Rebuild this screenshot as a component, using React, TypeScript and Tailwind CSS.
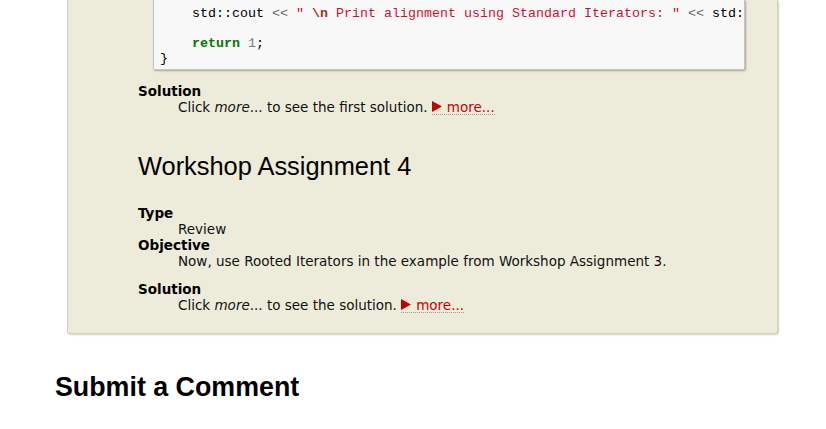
import React from "react";

function More() {
  return (
    <span className="inline-flex items-center border-b border-dotted border-[#9a9a9a] leading-[14px] text-[#cc0000]">
      <svg width="10" height="11" viewBox="0 0 10 11" className="mr-[5px]">
        <polygon points="0,0 10,5.5 0,11" fill="#c00000" />
      </svg>
      more...
    </span>
  );
}

export default function App() {
  const body = { fontFamily: '"DejaVu Sans", Verdana, sans-serif' };
  const mono = { fontFamily: '"Liberation Mono", "Courier New", monospace' };
  return (
    <div className="w-[826px] h-[429px] overflow-hidden bg-white text-black" style={body}>
      <div className="ml-[67px] w-[711px] bg-[#edecdb] border-x border-b border-[#d3d3a6] rounded-b-[3px] shadow-[1px_1px_2px_rgba(0,0,0,0.18)] pb-[20px]">
        <div className="ml-[85px] w-[592px] bg-[#f8f8f8] border-x border-b border-[#c4c4c4] rounded-b-[2px] shadow-[1px_1px_2px_rgba(0,0,0,0.3)] overflow-hidden">
          <pre className="text-[13.33px] leading-[15px] pt-[6px] pb-[3px] pl-[6px] whitespace-pre" style={mono}>
            <div>
              {"    "}
              <span className="text-[#000]">std::cout</span>
              <span className="text-[#666]"> &lt;&lt; </span>
              <span className="text-[#d01030]">" </span>
              <span className="text-[#b03010] font-bold">\n</span>
              <span className="text-[#d01030]"> Print alignment using Standard Iterators: "</span>
              <span className="text-[#666]"> &lt;&lt; </span>
              <span className="text-[#000]">std::cout</span>
            </div>
            <div>{" "}</div>
            <div>
              {"    "}
              <span className="text-[#007a00] font-bold">return</span>
              <span> </span>
              <span className="text-[#6f8080]">1</span>
              <span className="text-[#000]">;</span>
            </div>
            <div className="text-[#000]">{"}"}</div>
          </pre>
        </div>

        <div className="ml-[70px] text-[13.5px] leading-[16px]">
          <dl className="mt-[13px]">
            <dt className="font-bold">Solution</dt>
            <dd className="ml-[40px] text-[#111]">
              Click <em>more</em>... to see the first solution. <More />
            </dd>
          </dl>

          <h2 className="mt-[37px] text-[25.4px] leading-[29px] text-black" style={{ fontFamily: '"Liberation Sans", Arial, sans-serif' }}>
            Workshop Assignment 4
          </h2>

          <dl className="mt-[24px]">
            <dt className="font-bold">Type</dt>
            <dd className="ml-[40px] text-[#111]">Review</dd>
            <dt className="font-bold">Objective</dt>
            <dd className="ml-[40px] text-[#111] mb-[12px]">
              Now, use Rooted Iterators in the example from Workshop Assignment 3.
            </dd>
            <dt className="font-bold">Solution</dt>
            <dd className="ml-[40px] text-[#111]">
              Click <em>more</em>... to see the solution. <More />
            </dd>
          </dl>
        </div>
      </div>

      <h2
        className="mt-[38px] ml-[55px] text-[26.8px] leading-[31px] font-bold text-black"
        style={{ fontFamily: '"Liberation Sans", Arial, sans-serif' }}
      >
        Submit a Comment
      </h2>
    </div>
  );
}
